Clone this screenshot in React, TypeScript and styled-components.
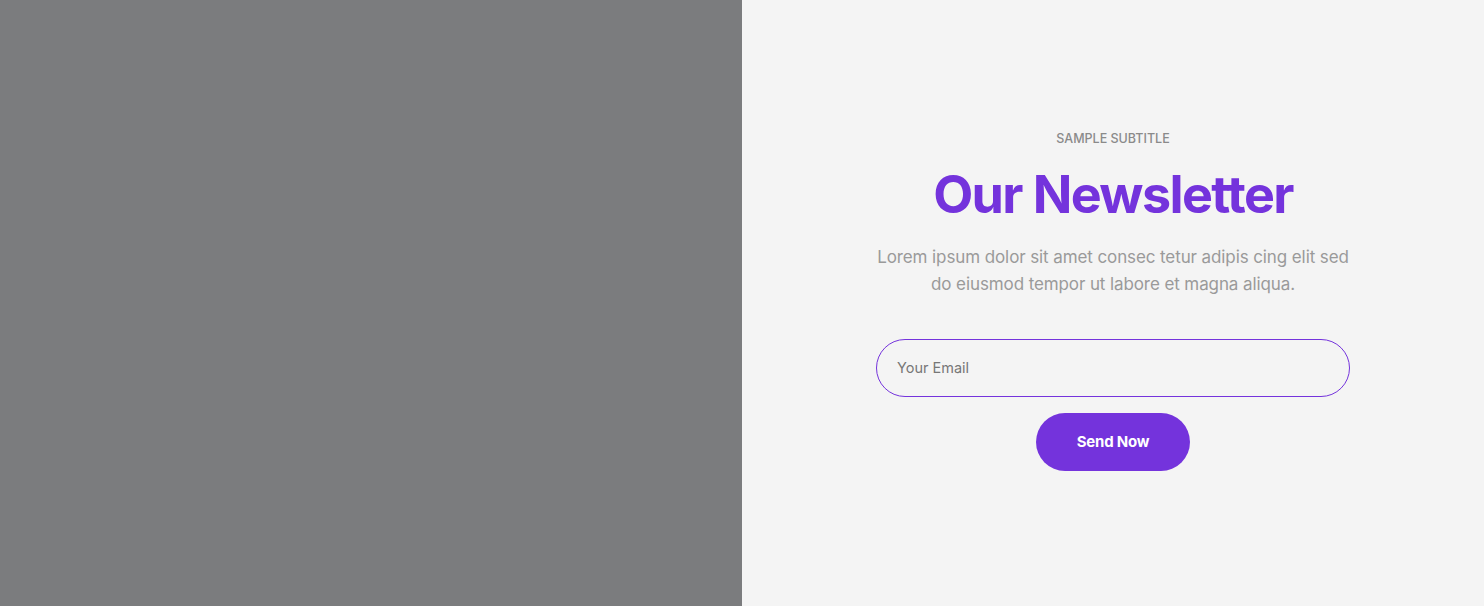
import React from "react";
import styled, { createGlobalStyle } from "styled-components";

const GlobalStyle = createGlobalStyle`
  html, body {
    margin: 0;
    padding: 0;
  }
  body {
    font-family: Inter, "Noto Sans", sans-serif;
  }
`;

const Page = styled.div`
  display: grid;
  grid-template-columns: 742px 1fr;
  height: 606px;
`;

const ImageSide = styled.div`
  background: #7b7c7e;
`;

const FormSide = styled.section`
  background: #f4f4f4;
  display: flex;
  align-items: center;
  justify-content: center;
`;

const Content = styled.div`
  width: 474px;
  margin-top: -5px;
  display: flex;
  flex-direction: column;
  align-items: center;
  text-align: center;
`;

const Subtitle = styled.span`
  font-size: 12.5px;
  font-weight: 500;
  color: #8a8a8a;
  line-height: 16px;
`;

const Title = styled.h2`
  margin: 18px 0 0;
  font-size: 52px;
  font-weight: 700;
  letter-spacing: -1.6px;
  line-height: 60px;
  color: #7433dc;
`;

const Description = styled.p`
  margin: 19px 0 0;
  font-size: 17px;
  line-height: 27px;
  color: #9a9a9a;
  letter-spacing: -0.1px;
`;

const Form = styled.form`
  width: 100%;
  margin-top: 41px;
  display: flex;
  flex-direction: column;
  align-items: center;
  gap: 16px;
`;

const EmailInput = styled.input`
  box-sizing: border-box;
  width: 100%;
  height: 58px;
  border: 1px solid #7433dc;
  border-radius: 29px;
  background: transparent;
  padding: 0 20px;
  font-family: inherit;
  font-size: 14.5px;
  color: #333;
  outline: none;
  &::placeholder {
    color: #777;
  }
`;

const SendButton = styled.button`
  width: 154px;
  height: 58px;
  border: none;
  border-radius: 29px;
  background: #7433dc;
  color: #fff;
  font-family: inherit;
  font-size: 15px;
  font-weight: 700;
  letter-spacing: -0.2px;
  cursor: pointer;
`;

const App = () => {
  return (
    <>
      <GlobalStyle />
      <Page>
        <ImageSide />
        <FormSide>
          <Content>
            <Subtitle>SAMPLE SUBTITLE</Subtitle>
            <Title>Our Newsletter</Title>
            <Description>
              Lorem ipsum dolor sit amet consec tetur adipis cing elit sed do
              eiusmod tempor ut labore et magna aliqua.
            </Description>
            <Form onSubmit={(e) => e.preventDefault()}>
              <EmailInput type="email" placeholder="Your Email" />
              <SendButton type="submit">Send Now</SendButton>
            </Form>
          </Content>
        </FormSide>
      </Page>
    </>
  );
};

export default App;
